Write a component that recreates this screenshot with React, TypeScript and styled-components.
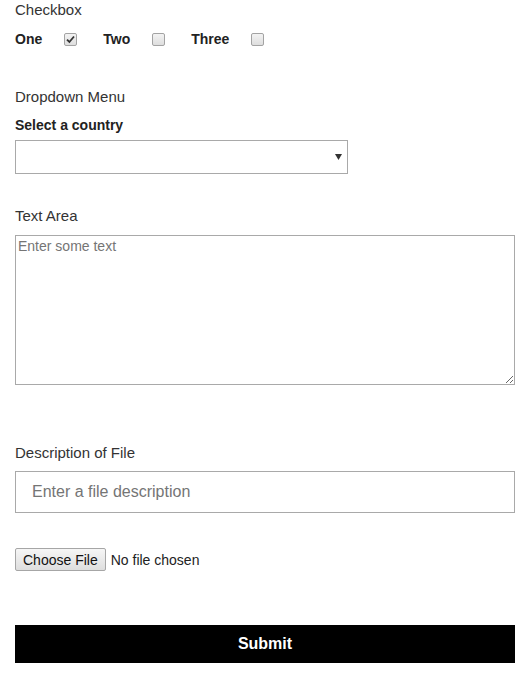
import React from "react";
import styled, { createGlobalStyle } from "styled-components";

const Global = createGlobalStyle`
  html, body { margin: 0; padding: 0; background: #fff; }
  body { font-family: "Liberation Sans", Arial, sans-serif; color: #333; }
  * { box-sizing: border-box; }
`;

const Form = styled.form`
  width: 500px;
  margin-left: 15px;
  display: flex;
  flex-direction: column;
`;

const SectionTitle = styled.div<{ $top?: number }>`
  font-size: 15px;
  line-height: 20px;
  height: 20px;
  margin-top: ${(p) => p.$top ?? 0}px;
  color: #333;
`;

const FieldLabel = styled.label<{ $top?: number }>`
  display: block;
  font-size: 14px;
  font-weight: bold;
  line-height: 20px;
  height: 20px;
  margin-top: ${(p) => p.$top ?? 0}px;
  color: #222;
`;

const CheckRow = styled.div`
  display: flex;
  align-items: center;
  height: 20px;
  margin-top: 9px;
`;

const CheckItem = styled.label`
  display: flex;
  align-items: center;
  gap: 22px;
  margin-right: 26px;
  font-size: 14px;
  font-weight: bold;
  color: #222;
`;

const Box = styled.span`
  width: 13px;
  height: 13px;
  border: 1px solid #a3a3a3;
  border-radius: 2px;
  background: linear-gradient(#f3f3f3, #dedede);
  display: inline-flex;
  align-items: center;
  justify-content: center;
`;

const Check = ({ checked }: { checked?: boolean }) => (
  <Box>
    {checked && (
      <svg width="9" height="9" viewBox="0 0 9 9">
        <path d="M1 4.6 L3.4 7 L8 1.5" fill="none" stroke="#333" strokeWidth="1.8" />
      </svg>
    )}
  </Box>
);

const SelectWrap = styled.div`
  position: relative;
  width: 333px;
  height: 34px;
  margin-top: 5px;
`;

const Select = styled.select`
  appearance: none;
  width: 100%;
  height: 100%;
  border: 1px solid #a9a9a9;
  border-radius: 0;
  background: #fff;
  font-family: "Liberation Sans", Arial, sans-serif;
  font-size: 14px;
`;

const Arrow = styled.svg`
  position: absolute;
  right: 6px;
  top: 14px;
  pointer-events: none;
`;

const TextArea = styled.textarea`
  display: block;
  width: 500px;
  height: 150px;
  margin-top: 9px;
  padding: 2px;
  border: 1px solid #a9a9a9;
  font-family: "Liberation Sans", Arial, sans-serif;
  font-size: 14px;
  line-height: 16px;
  color: #333;
  &::placeholder { color: #757575; }
`;

const TextInput = styled.input`
  display: block;
  width: 500px;
  height: 42px;
  margin-top: 8px;
  padding: 0 16px;
  border: 1px solid #a9a9a9;
  font-family: "Liberation Sans", Arial, sans-serif;
  font-size: 16px;
  color: #333;
  &::placeholder { color: #757575; }
`;

const FileRow = styled.div`
  display: flex;
  align-items: center;
  gap: 5px;
  margin-top: 35px;
  height: 23px;
`;

const FileButton = styled.button`
  height: 23px;
  padding: 0 7px;
  border: 1px solid #a6a6a6;
  border-radius: 2px;
  background: linear-gradient(#f6f6f6, #dedede);
  font-family: "Liberation Sans", Arial, sans-serif;
  font-size: 14px;
  color: #111;
`;

const FileText = styled.span`
  font-size: 14px;
  color: #222;
`;

const Submit = styled.button`
  width: 500px;
  height: 38px;
  margin-top: 54px;
  border: none;
  background: #000;
  color: #fff;
  font-family: "Liberation Sans", Arial, sans-serif;
  font-weight: bold;
  font-size: 16px;
`;

export default function App() {
  return (
    <>
      <Global />
      <Form onSubmit={(e) => e.preventDefault()}>
        <SectionTitle>Checkbox</SectionTitle>
        <CheckRow>
          <CheckItem>One<Check checked /></CheckItem>
          <CheckItem>Two<Check /></CheckItem>
          <CheckItem>Three<Check /></CheckItem>
        </CheckRow>

        <SectionTitle $top={38}>Dropdown Menu</SectionTitle>
        <FieldLabel $top={8}>Select a country</FieldLabel>
        <SelectWrap>
          <Select defaultValue="">
            <option value=""></option>
          </Select>
          <Arrow width="7" height="6" viewBox="0 0 7 6">
            <path d="M0 0 H7 L3.5 6 Z" fill="#333" />
          </Arrow>
        </SelectWrap>

        <SectionTitle $top={32}>Text Area</SectionTitle>
        <TextArea placeholder="Enter some text" />

        <SectionTitle $top={58}>Description of File</SectionTitle>
        <TextInput placeholder="Enter a file description" />

        <FileRow>
          <FileButton type="button">Choose File</FileButton>
          <FileText>No file chosen</FileText>
        </FileRow>

        <Submit type="submit">Submit</Submit>
      </Form>
    </>
  );
}
